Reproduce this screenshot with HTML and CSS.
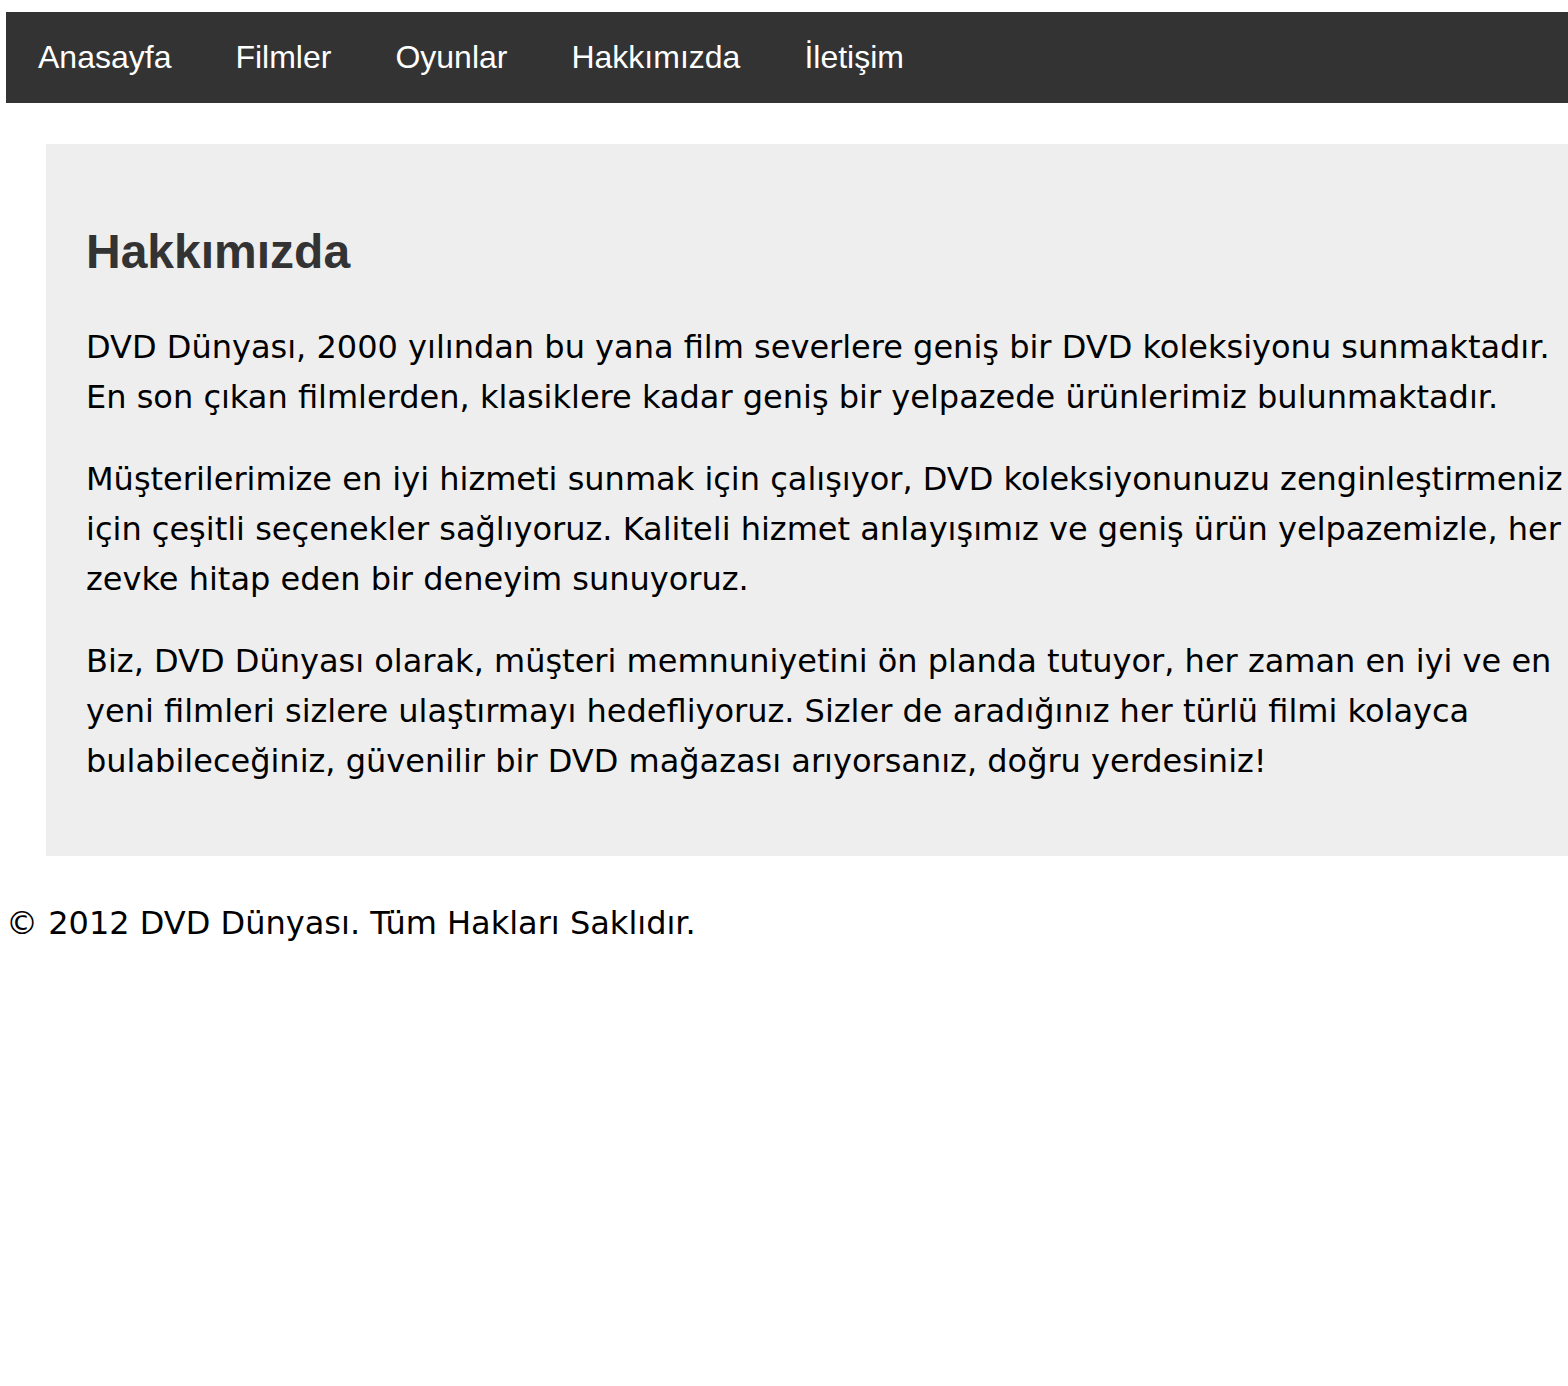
FILE: index.html
```html
<!DOCTYPE html>
<html lang="tr">
<head>
<meta charset="utf-8">
<title>Hakkımızda - DVD Dünyası</title>
<link rel="stylesheet" href="styles.css">
</head>
<body>
<nav class="topnav">
  <a class="topnav-link" href="#">Anasayfa</a>
  <a class="topnav-link" href="#">Filmler</a>
  <a class="topnav-link" href="#">Oyunlar</a>
  <a class="topnav-link" href="#">Hakkımızda</a>
  <a class="topnav-link" href="#">İletişim</a>
</nav>
<main class="about">
  <h2 class="about-title">Hakkımızda</h2>
  <p class="about-text">DVD Dünyası, 2000 yılından bu yana film severlere geniş bir DVD koleksiyonu sunmaktadır. En son çıkan filmlerden, klasiklere kadar geniş bir yelpazede ürünlerimiz bulunmaktadır.</p>
  <p class="about-text">Müşterilerimize en iyi hizmeti sunmak için çalışıyor, DVD koleksiyonunuzu zenginleştirmeniz için çeşitli seçenekler sağlıyoruz. Kaliteli hizmet anlayışımız ve geniş ürün yelpazemizle, her zevke hitap eden bir deneyim sunuyoruz.</p>
  <p class="about-text">Biz, DVD Dünyası olarak, müşteri memnuniyetini ön planda tutuyor, her zaman en iyi ve en yeni filmleri sizlere ulaştırmayı hedefliyoruz. Sizler de aradığınız her türlü filmi kolayca bulabileceğiniz, güvenilir bir DVD mağazası arıyorsanız, doğru yerdesiniz!</p>
</main>
<footer class="site-footer">© 2012 DVD Dünyası. Tüm Hakları Saklıdır.</footer>
</body>
</html>
```

FILE: styles.css
```css
html {
  overflow-x: hidden;
}

body {
  margin: 12px 0 0 6px;
  font-family: Verdana, "DejaVu Sans", sans-serif;
  font-size: 32px;
  color: #000;
  background: #fff;
}

.topnav {
  display: flex;
  align-items: center;
  height: 91px;
  background: #333;
  width: 1600px;
}

.topnav-link {
  font-family: Arial, "Liberation Sans", sans-serif;
  font-size: 32px;
  color: #fff;
  text-decoration: none;
  padding: 0 32px;
}

.about {
  display: block;
  margin: 41px 0 0 40px;
  padding: 40px;
  width: 1480px;
  background: #eee;
}

.about-title {
  font-family: Arial, "Liberation Sans", sans-serif;
  font-size: 48px;
  font-weight: bold;
  color: #333;
  margin: 40px 0 43px;
}

.about-text {
  line-height: 50px;
  margin: 32px 0;
}

.about-text:last-child {
  margin-bottom: 30px;
}

.site-footer {
  margin-top: 42px;
  line-height: 50px;
}
```
